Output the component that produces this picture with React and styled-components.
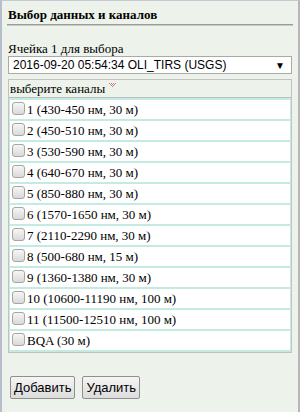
import React from "react"
import styled, { createGlobalStyle } from "styled-components"

const channels = [
  "1 (430-450 нм, 30 м)",
  "2 (450-510 нм, 30 м)",
  "3 (530-590 нм, 30 м)",
  "4 (640-670 нм, 30 м)",
  "5 (850-880 нм, 30 м)",
  "6 (1570-1650 нм, 30 м)",
  "7 (2110-2290 нм, 30 м)",
  "8 (500-680 нм, 15 м)",
  "9 (1360-1380 нм, 30 м)",
  "10 (10600-11190 нм, 100 м)",
  "11 (11500-12510 нм, 100 м)",
  "BQA (30 м)",
]

const GlobalStyle = createGlobalStyle`
  html, body { margin:0; padding:0; background:#edf3eb; }
  #root { width:300px; height:412px; }
`

const Panel = styled.div`
  box-sizing:border-box;
  width:300px;
  height:412px;
  background:#edf3eb;
  border-top:1px solid #c4c8d2;
  border-left:2px solid #b7bdcc;
  border-right:2px solid #b4b6bc;
  padding:0 6px 0 6px;
  display:flex;
  flex-direction:column;
  font-family:"Liberation Serif", "Times New Roman", serif;
  color:#000;
`

const Heading = styled.h3`
  margin:0 -1px;
  padding:6px 1px 2px;
  font:700 13px/15px "Liberation Serif", serif;
  border-bottom:1px solid #9a9a9a;
  box-shadow:0 1px 0 #c9cdc8;
`

const Label = styled.div`
  margin-top:16px;
  font:400 13px/15px "Liberation Serif", serif;
`

const Select = styled.div`
  box-sizing:border-box;
  height:18px;
  background:#fff;
  border:1px solid #a9a9a9;
  display:flex;
  align-items:center;
  justify-content:space-between;
  padding:0 6px 0 4px;
  font:400 12px "Liberation Sans", Arial, sans-serif;
  span { font-size:10px; }
`

const Box = styled.div`
  margin-top:5px;
  border:1px solid #c2c2c2;
  background:#c4ebe2;
`

const BoxHeader = styled.div`
  height:17px;
  background:#edf3eb;
  border-bottom:1px solid #bcbcbc;
  display:flex;
  align-items:center;
  padding-left:1px;
  font:400 13px "Liberation Serif", serif;
  svg { margin:-8px 0 0 4px; }
`

const List = styled.div`
  display:flex;
  flex-direction:column;
  gap:2px;
  padding:2px 1px;
`

const Row = styled.label`
  height:19px;
  background:#fff;
  display:flex;
  align-items:center;
  gap:2px;
  padding-left:2px;
  font:400 13px "Liberation Serif", serif;
  white-space:nowrap;
`

const Check = styled.span`
  box-sizing:border-box;
  width:13px;
  height:13px;
  border:1px solid #a5a5a5;
  border-radius:3px;
  background:linear-gradient(#f6f6f6, #d9d9d9);
  margin-top:-2px;
`

const Buttons = styled.div`
  display:flex;
  gap:7px;
  margin:23px 0 0 2px;
`

const Button = styled.button`
  box-sizing:border-box;
  height:23px;
  padding:0 3px;
  border:1px solid #8f8f8f;
  border-radius:2px;
  background:linear-gradient(#f5f5f5, #dcdcdc);
  font:400 13px "Liberation Sans", Arial, sans-serif;
  color:#000;
`

const SortMark = () => (
  <svg width="7" height="4" viewBox="0 0 7 4">
    {[[0,0],[2,0],[4,0],[6,0],[1,1],[3,1],[5,1],[2,2],[4,2],[3,3]].map(([x, y]) => (
      <rect key={`${x}-${y}`} x={x} y={y} width="1" height="1" fill="#e07a7a" />
    ))}
  </svg>
)

export default function App() {
  return (
    <>
      <GlobalStyle />
      <Panel>
        <Heading>Выбор данных и каналов</Heading>
        <Label>Ячейка 1 для выбора</Label>
        <Select>
          2016-09-20 05:54:34 OLI_TIRS (USGS)
          <span>▼</span>
        </Select>
        <Box>
          <BoxHeader>
            выберите каналы
            <SortMark />
          </BoxHeader>
          <List>
            {channels.map(c => (
              <Row key={c}>
                <Check />
                {c}
              </Row>
            ))}
          </List>
        </Box>
        <Buttons>
          <Button>Добавить</Button>
          <Button>Удалить</Button>
        </Buttons>
      </Panel>
    </>
  )
}
